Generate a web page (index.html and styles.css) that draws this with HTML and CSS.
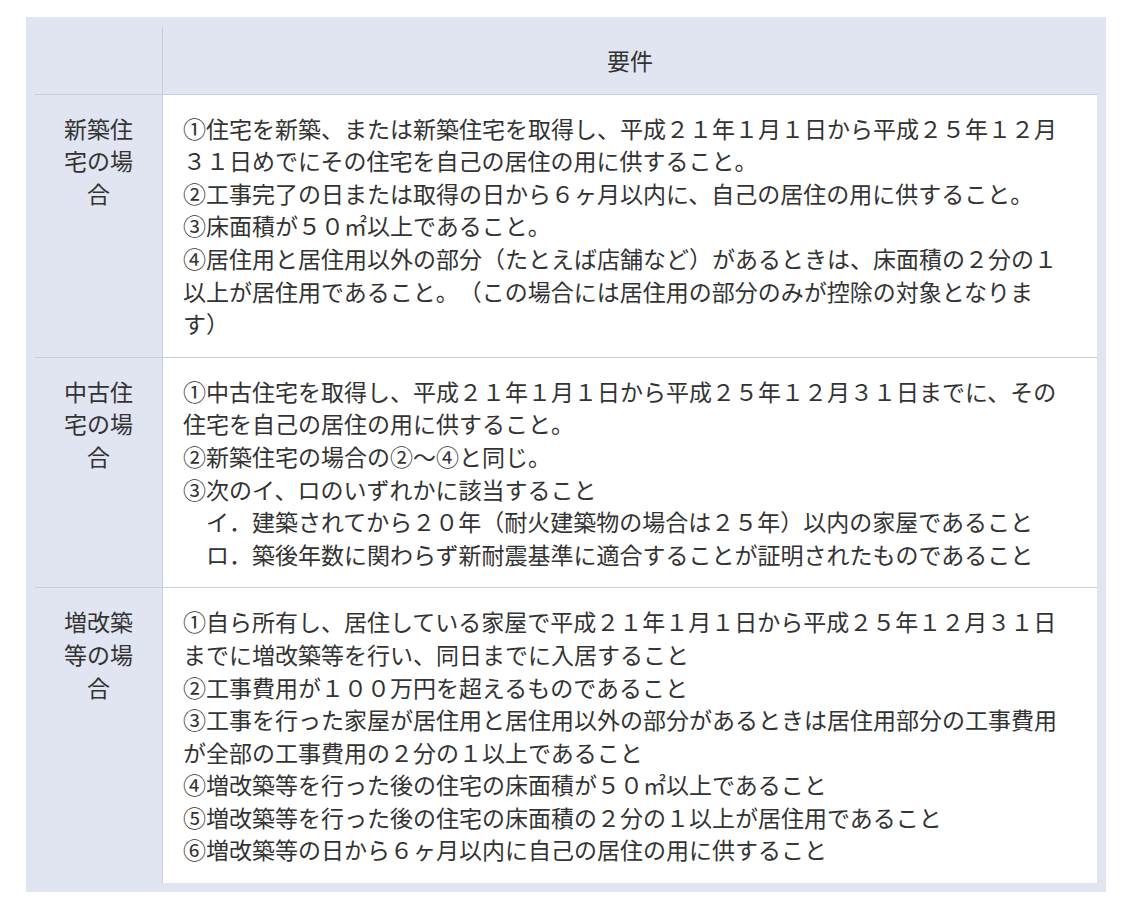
FILE: index.html
```html
<!DOCTYPE html>
<html lang="ja">
<head>
    <meta charset="UTF-8">
    <title>要件</title>
    <link rel="stylesheet" href="styles.css">
</head>
<body>
    <div class="panel">
        <table class="req">
            <thead>
                <tr>
                    <th class="label"></th>
                    <th class="head">要件</th>
                </tr>
            </thead>
            <tbody>
                <tr>
                    <th class="label">新築住宅の場合</th>
                    <td>
                        <p>①住宅を新築、または新築住宅を取得し、平成２１年１月１日から平成２５年１２月３１日めでにその住宅を自己の居住の用に供すること。</p>
                        <p>②工事完了の日または取得の日から６ヶ月以内に、自己の居住の用に供すること。</p>
                        <p>③床面積が５０㎡以上であること。</p>
                        <p>④居住用と居住用以外の部分（たとえば店舗など）があるときは、床面積の２分の１以上が居住用であること。（この場合には居住用の部分のみが控除の対象となります）</p>
                    </td>
                </tr>
                <tr>
                    <th class="label">中古住宅の場合</th>
                    <td>
                        <p>①中古住宅を取得し、平成２１年１月１日から平成２５年１２月３１日までに、その住宅を自己の居住の用に供すること。</p>
                        <p>②新築住宅の場合の②～④と同じ。</p>
                        <p>③次のイ、ロのいずれかに該当すること</p>
                        <p class="sub">イ．建築されてから２０年（耐火建築物の場合は２５年）以内の家屋であること</p>
                        <p class="sub">ロ．築後年数に関わらず新耐震基準に適合することが証明されたものであること</p>
                    </td>
                </tr>
                <tr class="last">
                    <th class="label">増改築等の場合</th>
                    <td>
                        <p>①自ら所有し、居住している家屋で平成２１年１月１日から平成２５年１２月３１日までに増改築等を行い、同日までに入居すること</p>
                        <p>②工事費用が１００万円を超えるものであること</p>
                        <p>③工事を行った家屋が居住用と居住用以外の部分があるときは居住用部分の工事費用が全部の工事費用の２分の１以上であること</p>
                        <p>④増改築等を行った後の住宅の床面積が５０㎡以上であること</p>
                        <p>⑤増改築等を行った後の住宅の床面積の２分の１以上が居住用であること</p>
                        <p>⑥増改築等の日から６ヶ月以内に自己の居住の用に供すること</p>
                    </td>
                </tr>
            </tbody>
        </table>
    </div>
</body>
</html>
```

FILE: styles.css
```css
body {
    margin: 0;
    background-color: #ffffff;
    font-family: "Noto Sans CJK JP", "Noto Sans", sans-serif;
    color: #333333;
}
.panel {
    margin: 17px 30px 0 26px;
    padding: 10px 9px 9px 9px;
    background-color: #e1e4f1;
}
.req {
    width: 100%;
    border-collapse: separate;
    border-spacing: 0;
    font-size: 23px;
    line-height: 32.6px;
    text-spacing-trim: space-all;
}
.req th,
.req td {
    padding: 17px 20px;
    vertical-align: top;
    font-weight: normal;
    border-bottom: 1px solid #c7cce0;
}
.req tr.last th,
.req tr.last td {
    border-bottom: none;
}
.req th.label {
    width: 87px;
    text-align: center;
    border-right: 1px solid #c7cce0;
    background-color: #e1e4f1;
}
.req th.head {
    text-align: center;
    background-color: #e1e4f1;
}
.req td {
    text-align: left;
    background-color: #ffffff;
}
.req p {
    margin: 0;
}
.req p.sub {
    padding-left: 1em;
}
```
